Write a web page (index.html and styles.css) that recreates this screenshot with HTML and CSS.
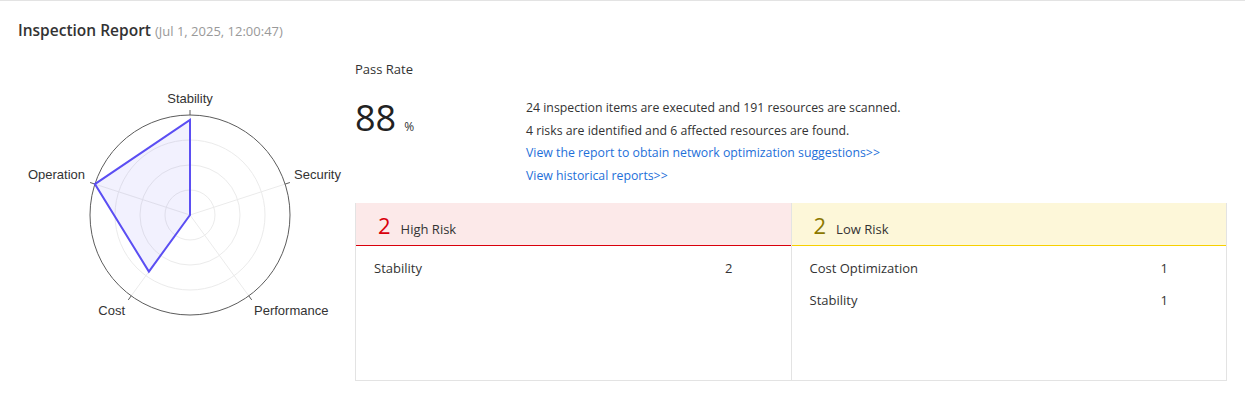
FILE: index.html
```html
<!DOCTYPE html>
<html>
<head>
<meta charset="utf-8">
<link rel="stylesheet" href="styles.css">
</head>
<body>
<div class="card">
  <div class="title"><span class="title-main">Inspection Report</span> <span class="title-date">(Jul 1, 2025, 12:00:47)</span></div>
  <div class="content">
    <div class="chart">
      <svg width="355" height="290" viewBox="0 60 355 290" xmlns="http://www.w3.org/2000/svg">
        <g fill="none" stroke="#ebebeb" stroke-width="1">
          <circle cx="190" cy="214" r="25"/>
          <circle cx="190" cy="214" r="50"/>
          <circle cx="190" cy="214" r="75"/>
          <line x1="190" y1="214" x2="190" y2="114"/>
          <line x1="190" y1="214" x2="285.1" y2="183.1"/>
          <line x1="190" y1="214" x2="248.8" y2="294.9"/>
          <line x1="190" y1="214" x2="131.2" y2="294.9"/>
          <line x1="190" y1="214" x2="94.9" y2="183.1"/>
        </g>
        <circle cx="190" cy="214" r="100" fill="none" stroke="#5c5c5c" stroke-width="1"/>
        <g stroke="#5c5c5c" stroke-width="1">
          <line x1="190" y1="114" x2="190" y2="109"/>
          <line x1="285.1" y1="183.1" x2="289.9" y2="181.5"/>
          <line x1="248.8" y1="294.9" x2="251.7" y2="298.9"/>
          <line x1="131.2" y1="294.9" x2="128.3" y2="298.9"/>
          <line x1="94.9" y1="183.1" x2="90.1" y2="181.5"/>
        </g>
        <polygon points="190,119 190,214 190,214 148.9,270.6 94.9,183.1" fill="rgba(92,80,240,0.08)" stroke="#5b4ef3" stroke-width="2" stroke-linejoin="miter"/>
        <g class="axis-label">
          <text x="190" y="102" text-anchor="middle">Stability</text>
          <text x="294" y="178" text-anchor="start">Security</text>
          <text x="254" y="314" text-anchor="start">Performance</text>
          <text x="125" y="314" text-anchor="end">Cost</text>
          <text x="85" y="178" text-anchor="end">Operation</text>
        </g>
      </svg>
    </div>
    <div class="main">
      <div class="pass-label">Pass Rate</div>
      <div class="summary">
        <div class="rate"><span class="rate-num">88</span><span class="rate-unit">%</span></div>
        <div class="desc">
          <div class="line">24 inspection items are executed and 191 resources are scanned.</div>
          <div class="line">4 risks are identified and 6 affected resources are found.</div>
          <div class="line"><a class="link" href="#">View the report to obtain network optimization suggestions&gt;&gt;</a></div>
          <div class="line"><a class="link" href="#">View historical reports&gt;&gt;</a></div>
        </div>
      </div>
      <div class="risks">
        <div class="risk risk-high">
          <div class="risk-head"><span class="risk-count">2</span><span class="risk-name">High Risk</span></div>
          <div class="risk-body">
            <div class="row"><span class="row-label">Stability</span><span class="row-val">2</span></div>
          </div>
        </div>
        <div class="risk risk-low">
          <div class="risk-head"><span class="risk-count">2</span><span class="risk-name">Low Risk</span></div>
          <div class="risk-body">
            <div class="row"><span class="row-label">Cost Optimization</span><span class="row-val">1</span></div>
            <div class="row"><span class="row-label">Stability</span><span class="row-val">1</span></div>
          </div>
        </div>
      </div>
    </div>
  </div>
</div>
</body>
</html>
```

FILE: styles.css
```css
* { box-sizing: border-box; }
html, body { margin: 0; padding: 0; background: #fff; }
body {
  font-family: "Open Sans", "Noto Sans", "Liberation Sans", sans-serif;
  color: #333;
  width: 1245px;
  height: 398px;
  overflow: hidden;
}
.card {
  border-top: 1px solid #e3e3e3;
  padding: 19px 18px 0 18px;
  height: 398px;
}
.title { font-size: 15.5px; line-height: 20px; }
.title-main { font-weight: 600; color: #333; }
.title-date { font-size: 13px; color: #999; }
.content { display: flex; margin-top: 19px; }
.chart { width: 355px; flex: none; margin-left: -18px; margin-top: 1px; }
.chart svg { display: block; }
.axis-label text { font-family: "Liberation Sans", Arial, sans-serif; font-size: 13px; fill: #333; }
.main { flex: 1; }
.pass-label { font-size: 13px; line-height: 18px; }
.summary { display: flex; margin-top: 18px; }
.rate { width: 171px; font-size: 36px; line-height: 44px; }
.rate-num { font-size: 36px; font-weight: 400; color: #222; }
.rate-unit { font-size: 12px; margin-left: 8px; }
.desc { font-size: 12.3px; margin-top: 1px; }
.line { line-height: 22.5px; }
.link { color: #1e6fd9; text-decoration: none; }
.risks {
  display: flex;
  margin-top: 16px;
  width: 872px;
  height: 178px;
  border: 1px solid #e3e3e3;
  border-top: none;
}
.risk { flex: 1; display: flex; flex-direction: column; }
.risk-high { border-right: 1px solid #e3e3e3; }
.risk-head { height: 43px; display: flex; align-items: baseline; padding-left: 22px; padding-top: 7px; }
.risk-high .risk-head { background: #fce9e9; border-bottom: 1px solid #d9000b; }
.risk-low .risk-head { background: #fdf7d9; border-bottom: 1px solid #f7d000; }
.risk-count { font-size: 22px; line-height: 30px; font-weight: 500; margin-right: 10px; }
.risk-high .risk-count { color: #d9000b; }
.risk-low .risk-count { color: #8c7800; }
.risk-name { font-size: 13px; color: #333; }
.risk-body { padding-top: 6px; }
.row { display: flex; height: 32px; align-items: center; padding-left: 18px; font-size: 13px; }
.row-label { width: 351px; }
```
